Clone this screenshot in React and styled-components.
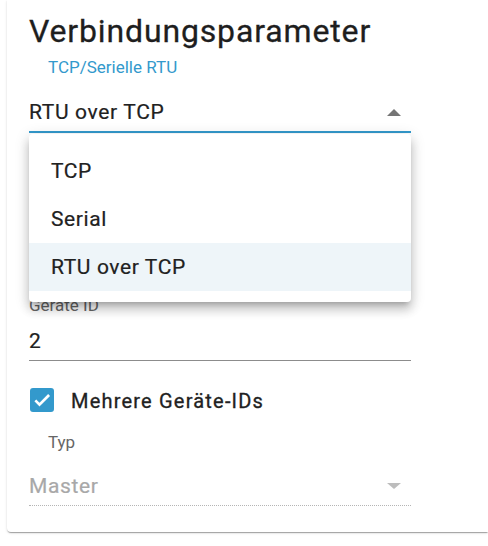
import React from 'react';
import styled, { createGlobalStyle } from 'styled-components';

const GlobalStyle = createGlobalStyle`
  html, body {
    margin: 0;
    padding: 0;
    background: #fff;
    overflow: hidden;
  }
  body {
    font-family: Roboto, "Liberation Sans", Arial, sans-serif;
    color: #212121;
  }
`;

const Page = styled.div`
  width: 488px;
  height: 546px;
  padding-left: 7px;
  box-sizing: border-box;
  overflow: hidden;
`;

const Card = styled.div`
  width: 481px;
  box-sizing: border-box;
  padding: 12px 0 26px 22px;
  background: #fff;
  border-radius: 0 0 0 4px;
  box-shadow: 0 2px 1px -1px rgba(0, 0, 0, 0.2), 0 1px 1px 0 rgba(0, 0, 0, 0.14),
    0 1px 3px 0 rgba(0, 0, 0, 0.12);
`;

const Content = styled.div`
  width: 382px;
  display: flex;
  flex-direction: column;
`;

const Title = styled.h2`
  margin: 0;
  font-size: 32px;
  line-height: 38px;
  font-weight: 400;
  letter-spacing: 0.85px;
  color: #1e1e1e;
  -webkit-text-stroke: 0.3px #1e1e1e;
`;

const Field = styled.div`
  position: relative;
  display: flex;
  flex-direction: column;
  margin-top: ${(p) => p.gap || 0}px;
`;

const Label = styled.label`
  font-size: 17px;
  line-height: 20px;
  color: ${(p) => (p.active ? '#3399cc' : '#666')};
  padding-left: ${(p) => (p.indent ? 19 : 0)}px;
`;

const InputRow = styled.div`
  display: flex;
  align-items: center;
  justify-content: space-between;
  margin-top: ${(p) => p.gap || 0}px;
  padding-bottom: 7px;
  border-bottom: ${(p) =>
    p.variant === 'focused'
      ? '2px solid #3399cc'
      : p.variant === 'disabled'
      ? '1px dotted #b5b5b5'
      : '1px solid #8c8c8c'};
`;

const Value = styled.span`
  font-size: 21px;
  line-height: 24px;
  font-weight: 400;
  letter-spacing: 0.65px;
  color: ${(p) => (p.disabled ? '#a8a8a8' : '#212121')};
  -webkit-text-stroke: 0.2px ${(p) => (p.disabled ? '#a8a8a8' : '#212121')};
`;

const Arrow = styled.span`
  width: 0;
  height: 0;
  margin-right: 10px;
  border-left: 7px solid transparent;
  border-right: 7px solid transparent;
  ${(p) =>
    p.up
      ? 'border-bottom: 7px solid #757575;'
      : `border-top: 6px solid ${p.disabled ? '#bdbdbd' : '#757575'};`}
`;

const Menu = styled.ul`
  position: absolute;
  top: calc(100% + 1px);
  left: 0;
  right: 0;
  z-index: 10;
  margin: 0;
  padding: 13px 0 11px;
  list-style: none;
  background: #fff;
  border-radius: 4px;
  box-shadow: 0 5px 5px -3px rgba(0, 0, 0, 0.2), 0 8px 10px 1px rgba(0, 0, 0, 0.14),
    0 3px 14px 2px rgba(0, 0, 0, 0.12);
`;

const MenuItem = styled.li`
  height: 48px;
  display: flex;
  align-items: center;
  padding-left: 22px;
  font-size: 21px;
  font-weight: 400;
  letter-spacing: 0.6px;
  color: #212121;
  -webkit-text-stroke: 0.2px #212121;
  background: ${(p) => (p.selected ? '#eef5f9' : 'transparent')};
`;

const CheckRow = styled.div`
  display: flex;
  align-items: flex-start;
  gap: 17px;
  margin-top: 27px;
  padding-left: 1px;
`;

const Box = styled.span`
  width: 24px;
  height: 24px;
  border-radius: 3px;
  background: #3399cc;
  display: flex;
  align-items: center;
  justify-content: center;
`;

const CheckLabel = styled.span`
  font-size: 20px;
  line-height: 24px;
  font-weight: 400;
  letter-spacing: 1.2px;
  padding-top: 1px;
  color: #212121;
  -webkit-text-stroke: 0.3px #212121;
`;

export default function App() {
  const options = ['TCP', 'Serial', 'RTU over TCP'];
  const current = 'RTU over TCP';

  return (
    <Page>
      <GlobalStyle />
      <Card>
        <Content>
          <Title>Verbindungsparameter</Title>

          <Field gap={7}>
            <Label active indent>TCP/Serielle RTU</Label>
            <InputRow gap={23} variant="focused">
              <Value>{current}</Value>
              <Arrow up />
            </InputRow>
            <Menu>
              {options.map((o) => (
                <MenuItem key={o} selected={o === current}>
                  {o}
                </MenuItem>
              ))}
            </Menu>
          </Field>

          <Field gap={162}>
            <Label>Geräte ID</Label>
            <InputRow gap={14}>
              <Value>2</Value>
            </InputRow>
          </Field>

          <CheckRow>
            <Box>
              <svg width="20" height="20" viewBox="0 0 24 24">
                <path d="M4 12.5l5 5L20.5 6" fill="none" stroke="#fff" strokeWidth="3.2" />
              </svg>
            </Box>
            <CheckLabel>Mehrere Geräte-IDs</CheckLabel>
          </CheckRow>

          <Field gap={19}>
            <Label indent>Typ</Label>
            <InputRow gap={22} variant="disabled">
              <Value disabled>Master</Value>
              <Arrow disabled />
            </InputRow>
          </Field>
        </Content>
      </Card>
    </Page>
  );
}
